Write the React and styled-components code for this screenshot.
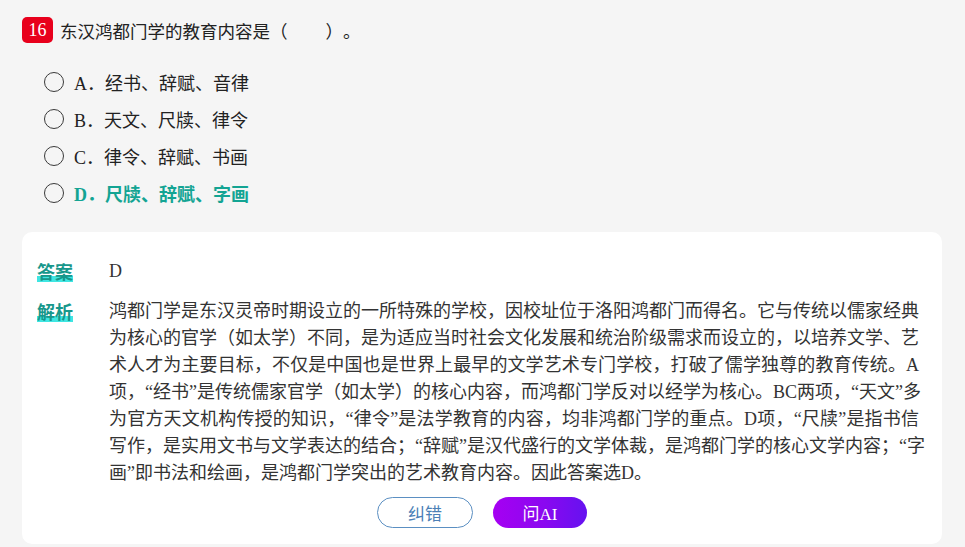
import React from "react";
import styled, { createGlobalStyle } from "styled-components";

const GlobalStyle = createGlobalStyle`
  html, body {
    margin: 0;
    padding: 0;
    background: #f5f5f5;
  }
  body {
    font-family: "Liberation Serif", "Noto Sans CJK SC", serif;
    color: #333;
  }
`;

const Page = styled.div`
  width: 965px;
  height: 547px;
  box-sizing: border-box;
  padding: 17px 23px 0 22px;
  overflow: hidden;
`;

const QuestionRow = styled.div`
  display: flex;
  align-items: center;
  gap: 7px;
  height: 26px;
`;

const NumberBadge = styled.span`
  display: flex;
  align-items: center;
  justify-content: center;
  width: 31px;
  height: 26px;
  border-radius: 5px;
  background: #e8001c;
  color: #fff;
  font-size: 18px;
`;

const QuestionText = styled.span`
  font-size: 17.5px;
  color: #222;
  text-spacing-trim: space-all;
`;

const Blank = styled.span`
  display: inline-block;
  width: 38px;
`;

const Options = styled.ul`
  list-style: none;
  margin: 20px 0 0;
  padding: 0 0 0 22px;
`;

const Option = styled.li`
  display: flex;
  align-items: center;
  height: 37px;
  font-size: 18px;
  color: ${(p) => (p.$correct ? "#13a493" : "#222")};
  font-weight: ${(p) => (p.$correct ? 700 : 400)};
`;

const Radio = styled.span`
  width: 20px;
  height: 20px;
  box-sizing: border-box;
  border: 1.6px solid #3a3a3a;
  border-radius: 50%;
  margin-right: 10px;
  flex-shrink: 0;
`;

const Card = styled.div`
  margin-top: 21px;
  background: #fff;
  border-radius: 10px;
  padding: 26px 15px 14px;
  box-sizing: border-box;
  height: 312px;
`;

const Row = styled.div`
  display: grid;
  grid-template-columns: 72px 810px;
  margin-bottom: 13px;
  font-size: 18px;
  line-height: 27px;
`;

const Label = styled.span`
  justify-self: start;
  align-self: start;
  font-family: "Noto Sans CJK SC", sans-serif;
  font-weight: 700;
  font-size: 18px;
  color: #17978b;
  line-height: 27px;
  background: linear-gradient(
    to bottom,
    transparent 66%,
    #3fe6e2 66%,
    #3fe6e2 90%,
    transparent 90%
  );
`;

const Body = styled.div`
  color: #333;
`;

const Line = styled.div`
  text-align: justify;
  text-align-last: ${(p) => (p.$last ? "left" : "justify")};
  white-space: nowrap;
`;

const Actions = styled.div`
  display: flex;
  justify-content: center;
  gap: 20px;
  margin-top: -3px;
`;

const Button = styled.button`
  width: 96px;
  height: 31px;
  border-radius: 16px;
  font-family: "Liberation Serif", "Noto Sans CJK SC", serif;
  font-size: 17px;
  cursor: pointer;
  padding: 0;
  border: 1px solid #5b8fc2;
  background: #fff;
  color: #4b7fb6;
`;

const AskButton = styled(Button)`
  width: 94px;
  border: none;
  color: #fff;
  background: linear-gradient(90deg, #a600f2 0%, #8a08f0 55%, #6512f0 100%);
`;

const analysis = [
  "鸿都门学是东汉灵帝时期设立的一所特殊的学校，因校址位于洛阳鸿都门而得名。它与传统以儒家经典",
  "为核心的官学（如太学）不同，是为适应当时社会文化发展和统治阶级需求而设立的，以培养文学、艺",
  "术人才为主要目标，不仅是中国也是世界上最早的文学艺术专门学校，打破了儒学独尊的教育传统。A",
  "项，“经书”是传统儒家官学（如太学）的核心内容，而鸿都门学反对以经学为核心。BC两项，“天文”多",
  "为官方天文机构传授的知识，“律令”是法学教育的内容，均非鸿都门学的重点。D项，“尺牍”是指书信",
  "写作，是实用文书与文学表达的结合；“辞赋”是汉代盛行的文学体裁，是鸿都门学的核心文学内容；“字",
  "画”即书法和绘画，是鸿都门学突出的艺术教育内容。因此答案选D。",
];

const options = [
  { key: "A", text: "经书、辞赋、音律" },
  { key: "B", text: "天文、尺牍、律令" },
  { key: "C", text: "律令、辞赋、书画" },
  { key: "D", text: "尺牍、辞赋、字画", correct: true },
];

const App = () => {
  return (
    <>
      <GlobalStyle />
      <Page>
        <QuestionRow>
          <NumberBadge>16</NumberBadge>
          <QuestionText>
            东汉鸿都门学的教育内容是（<Blank />）。
          </QuestionText>
        </QuestionRow>
        <Options>
          {options.map((o) => (
            <Option key={o.key} $correct={o.correct}>
              <Radio />
              {o.key}．{o.text}
            </Option>
          ))}
        </Options>
        <Card>
          <Row>
            <Label>答案</Label>
            <Body>D</Body>
          </Row>
          <Row>
            <Label>解析</Label>
            <Body>
              {analysis.map((line, i) => (
                <Line key={i} $last={i === analysis.length - 1}>
                  {line}
                </Line>
              ))}
            </Body>
          </Row>
          <Actions>
            <Button>纠错</Button>
            <AskButton>问AI</AskButton>
          </Actions>
        </Card>
      </Page>
    </>
  );
};

export default App;
